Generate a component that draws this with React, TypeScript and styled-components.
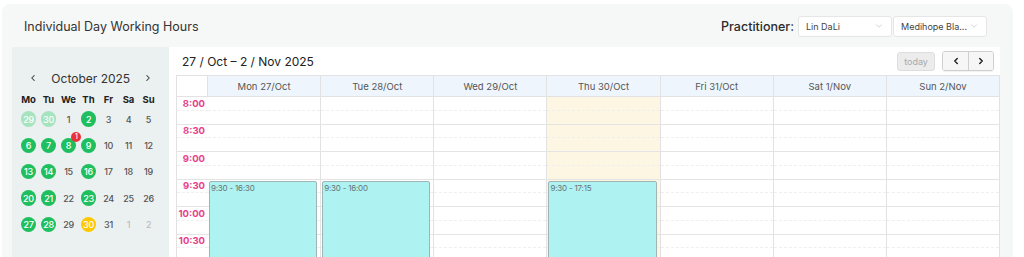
import React from "react";
import styled, { createGlobalStyle } from "styled-components";
import { ChevronDown, ChevronLeft, ChevronRight } from "lucide-react";

const GlobalStyle = createGlobalStyle`
  html, body {
    margin: 0;
    padding: 0;
    background: #ffffff;
    font-family: Inter, "Noto Sans", sans-serif;
    overflow: hidden;
  }
  * {
    box-sizing: border-box;
  }
`;

const SLOT = 13.75;
const START_HOUR = 8;
const SLOT_COUNT = 12;

const StyledPage = styled.div`
  height: 257px;
  overflow: hidden;
  padding: 4px 11px 0 2px;
`;

const StyledCard = styled.div`
  background: #f6f8f8;
  border-radius: 8px;
  height: 300px;
`;

const StyledCardHeader = styled.div`
  display: flex;
  align-items: center;
  justify-content: space-between;
  height: 43px;
  padding: 1px 26px 0 22px;
`;

const StyledTitle = styled.h2`
  margin: 0;
  font-size: 12.5px;
  font-weight: 400;
  color: #333;
`;

const StyledFilters = styled.div`
  display: flex;
  align-items: center;
  gap: 1px;
`;

const StyledFilterLabel = styled.span`
  font-size: 12.5px;
  font-weight: 500;
  color: #2b2b2b;
  margin-right: 3px;
`;

const StyledSelect = styled.div`
  display: flex;
  align-items: center;
  justify-content: space-between;
  width: 94px;
  height: 21px;
  padding: 0 7px;
  background: #fff;
  border: 1px solid #e6e6e6;
  border-radius: 3px;
  font-size: 9px;
  color: #444;
`;

const StyledBody = styled.div`
  display: flex;
  padding: 0 13px 0 10px;
`;

const StyledMiniCal = styled.div`
  width: 157px;
  flex-shrink: 0;
  background: #ebf0f0;
  padding: 21px 0 0 6.5px;
  height: 220px;
`;

const StyledMonthNav = styled.div`
  display: flex;
  align-items: center;
  justify-content: center;
  gap: 13px;
  height: 20px;
  margin-bottom: 4px;
  padding-right: 6px;
  font-size: 12px;
  color: #333;
`;

const StyledDayGrid = styled.div`
  display: grid;
  grid-template-columns: repeat(7, 20px);
`;

const StyledWeekday = styled.div`
  height: 14px;
  display: flex;
  align-items: center;
  justify-content: center;
  font-size: 9.5px;
  font-weight: 700;
  color: #222;
`;

const StyledDayCell = styled.div`
  height: 26.3px;
  display: flex;
  align-items: center;
  justify-content: center;
`;

type DayTone = "plain" | "muted" | "green" | "faded" | "today";

const toneBg: Record<DayTone, string> = {
  plain: "transparent",
  muted: "transparent",
  green: "#1fbf5f",
  faded: "#a6e3bf",
  today: "#ffc800",
};

const toneColor: Record<DayTone, string> = {
  plain: "#555",
  muted: "#bdbdbd",
  green: "#fff",
  faded: "#fff",
  today: "#fff",
};

const StyledDayNum = styled.span<{ $tone: DayTone }>`
  position: relative;
  width: 15.5px;
  height: 15.5px;
  border-radius: 50%;
  display: flex;
  align-items: center;
  justify-content: center;
  font-size: 9px;
  font-weight: 500;
  letter-spacing: -0.3px;
  background: ${(p) => toneBg[p.$tone]};
  color: ${(p) => toneColor[p.$tone]};
`;

const StyledBadge = styled.span`
  position: absolute;
  top: -6px;
  right: -5px;
  width: 10px;
  height: 10px;
  border-radius: 50%;
  background: #e8333a;
  color: #fff;
  font-size: 7px;
  display: flex;
  align-items: center;
  justify-content: center;
`;

const StyledMain = styled.div`
  flex: 1;
  background: #fff;
  height: 220px;
`;

const StyledToolbar = styled.div`
  display: flex;
  align-items: center;
  justify-content: space-between;
  height: 28px;
  padding: 0 6px 0 13px;
`;

const StyledRange = styled.div`
  font-size: 12px;
  color: #222;
`;

const StyledToolButtons = styled.div`
  display: flex;
  align-items: center;
  gap: 7px;
`;

const StyledTodayButton = styled.button`
  width: 38px;
  height: 19px;
  padding: 0;
  border: 1px solid #dedede;
  border-radius: 3px;
  background: #ececec;
  color: #a9a9a9;
  font-family: inherit;
  font-size: 9px;
`;

const StyledNavGroup = styled.div`
  display: flex;
  border: 1px solid #cfcfcf;
  border-radius: 3px;
  overflow: hidden;
  box-shadow: 0 1px 1px rgba(0, 0, 0, 0.06);
`;

const StyledNavButton = styled.button`
  width: 25px;
  height: 18px;
  padding: 0;
  border: none;
  background: #f6f6f6;
  display: flex;
  align-items: center;
  justify-content: center;
  & + & {
    border-left: 1px solid #cfcfcf;
  }
`;

const StyledTable = styled.div`
  margin-left: 7px;
  border-left: 1px solid #e2e2e2;
  border-top: 1px solid #e2e2e2;
`;

const StyledColumns = styled.div`
  display: grid;
  grid-template-columns: 31px repeat(7, 1fr);
`;

const StyledHeadCell = styled.div<{ $blank?: boolean }>`
  height: 21px;
  display: flex;
  align-items: center;
  justify-content: center;
  font-size: 9.5px;
  color: #555;
  background: ${(p) => (p.$blank ? "#fff" : "#eef5fc")};
  border-right: 1px solid #e2e2e2;
  border-bottom: 1px solid #e2e2e2;
`;

const StyledDayColumn = styled.div<{ $today?: boolean }>`
  position: relative;
  background: ${(p) => (p.$today ? "#fcf6e2" : "#fff")};
  border-right: 1px solid #e2e2e2;
`;

const StyledSlot = styled.div<{ $minor: boolean }>`
  height: ${SLOT}px;
  border-bottom: ${(p) => (p.$minor ? "1px dashed #efefef" : "1px solid #e4e4e4")};
`;

const StyledTimeSlot = styled(StyledSlot)`
  display: flex;
  align-items: center;
  justify-content: flex-end;
  padding-right: 3px;
  font-size: 9.5px;
  font-weight: 700;
  color: #e83e8c;
`;

const StyledEvent = styled.div`
  position: absolute;
  left: 1px;
  right: 3px;
  background: #aef3f2;
  border: 1px solid #9fb4b4;
  border-radius: 2px;
  padding: 1px 1px;
  font-size: 8px;
  letter-spacing: -0.2px;
  color: #667272;
`;

type Day = { n: number; tone: DayTone; badge?: number };

const monthDays: Day[] = [
  { n: 29, tone: "faded" },
  { n: 30, tone: "faded" },
  { n: 1, tone: "plain" },
  { n: 2, tone: "green" },
  { n: 3, tone: "plain" },
  { n: 4, tone: "plain" },
  { n: 5, tone: "plain" },
  { n: 6, tone: "green" },
  { n: 7, tone: "green" },
  { n: 8, tone: "green", badge: 1 },
  { n: 9, tone: "green" },
  { n: 10, tone: "plain" },
  { n: 11, tone: "plain" },
  { n: 12, tone: "plain" },
  { n: 13, tone: "green" },
  { n: 14, tone: "green" },
  { n: 15, tone: "plain" },
  { n: 16, tone: "green" },
  { n: 17, tone: "plain" },
  { n: 18, tone: "plain" },
  { n: 19, tone: "plain" },
  { n: 20, tone: "green" },
  { n: 21, tone: "green" },
  { n: 22, tone: "plain" },
  { n: 23, tone: "green" },
  { n: 24, tone: "plain" },
  { n: 25, tone: "plain" },
  { n: 26, tone: "plain" },
  { n: 27, tone: "green" },
  { n: 28, tone: "green" },
  { n: 29, tone: "plain" },
  { n: 30, tone: "today" },
  { n: 31, tone: "plain" },
  { n: 1, tone: "muted" },
  { n: 2, tone: "muted" },
];

const weekdays = ["Mo", "Tu", "We", "Th", "Fr", "Sa", "Su"];

type WeekDay = { label: string; today?: boolean; shift?: [string, string] };

const week: WeekDay[] = [
  { label: "Mon 27/Oct", shift: ["9:30", "16:30"] },
  { label: "Tue 28/Oct", shift: ["9:30", "16:00"] },
  { label: "Wed 29/Oct" },
  { label: "Thu 30/Oct", today: true, shift: ["9:30", "17:15"] },
  { label: "Fri 31/Oct" },
  { label: "Sat 1/Nov" },
  { label: "Sun 2/Nov" },
];

const toSlots = (t: string) => {
  const [h, m] = t.split(":").map(Number);
  return ((h - START_HOUR) * 60 + m) / 15;
};

const slotLabel = (i: number) => {
  if (i % 2 !== 0) return "";
  const mins = START_HOUR * 60 + i * 15;
  return `${Math.floor(mins / 60)}:${String(mins % 60).padStart(2, "0")}`;
};

const slots = Array.from({ length: SLOT_COUNT }, (_, i) => i);

const MiniCalendar: React.FC = () => (
  <StyledMiniCal>
    <StyledMonthNav>
      <ChevronLeft size={10} strokeWidth={2.5} color="#333" />
      <span>October 2025</span>
      <ChevronRight size={10} strokeWidth={2.5} color="#333" />
    </StyledMonthNav>
    <StyledDayGrid>
      {weekdays.map((w) => (
        <StyledWeekday key={w}>{w}</StyledWeekday>
      ))}
      {monthDays.map((d, i) => (
        <StyledDayCell key={i}>
          <StyledDayNum $tone={d.tone}>
            {d.n}
            {d.badge && <StyledBadge>{d.badge}</StyledBadge>}
          </StyledDayNum>
        </StyledDayCell>
      ))}
    </StyledDayGrid>
  </StyledMiniCal>
);

const WeekView: React.FC = () => (
  <StyledMain>
    <StyledToolbar>
      <StyledRange>27 / Oct – 2 / Nov 2025</StyledRange>
      <StyledToolButtons>
        <StyledTodayButton>today</StyledTodayButton>
        <StyledNavGroup>
          <StyledNavButton>
            <ChevronLeft size={10} strokeWidth={3.5} color="#222" />
          </StyledNavButton>
          <StyledNavButton>
            <ChevronRight size={10} strokeWidth={3.5} color="#222" />
          </StyledNavButton>
        </StyledNavGroup>
      </StyledToolButtons>
    </StyledToolbar>
    <StyledTable>
      <StyledColumns>
        <StyledHeadCell $blank />
        {week.map((d) => (
          <StyledHeadCell key={d.label}>{d.label}</StyledHeadCell>
        ))}
        <div>
          {slots.map((i) => (
            <StyledTimeSlot key={i} $minor={i % 2 === 0}>
              {slotLabel(i)}
            </StyledTimeSlot>
          ))}
        </div>
        {week.map((d) => (
          <StyledDayColumn key={d.label} $today={d.today}>
            {slots.map((i) => (
              <StyledSlot key={i} $minor={i % 2 === 0} />
            ))}
            {d.shift && (
              <StyledEvent
                style={{
                  top: toSlots(d.shift[0]) * SLOT + 1,
                  height: (toSlots(d.shift[1]) - toSlots(d.shift[0])) * SLOT - 2,
                }}
              >
                {d.shift[0]} - {d.shift[1]}
              </StyledEvent>
            )}
          </StyledDayColumn>
        ))}
      </StyledColumns>
    </StyledTable>
  </StyledMain>
);

const App: React.FC = () => (
  <StyledPage>
    <GlobalStyle />
    <StyledCard>
      <StyledCardHeader>
        <StyledTitle>Individual Day Working Hours</StyledTitle>
        <StyledFilters>
          <StyledFilterLabel>Practitioner:</StyledFilterLabel>
          <StyledSelect>
            <span>Lin DaLi</span>
            <ChevronDown size={10} strokeWidth={1.5} color="#bbb" />
          </StyledSelect>
          <StyledSelect>
            <span>Medihope Bla...</span>
            <ChevronDown size={10} strokeWidth={1.5} color="#bbb" />
          </StyledSelect>
        </StyledFilters>
      </StyledCardHeader>
      <StyledBody>
        <MiniCalendar />
        <WeekView />
      </StyledBody>
    </StyledCard>
  </StyledPage>
);

export default App;
